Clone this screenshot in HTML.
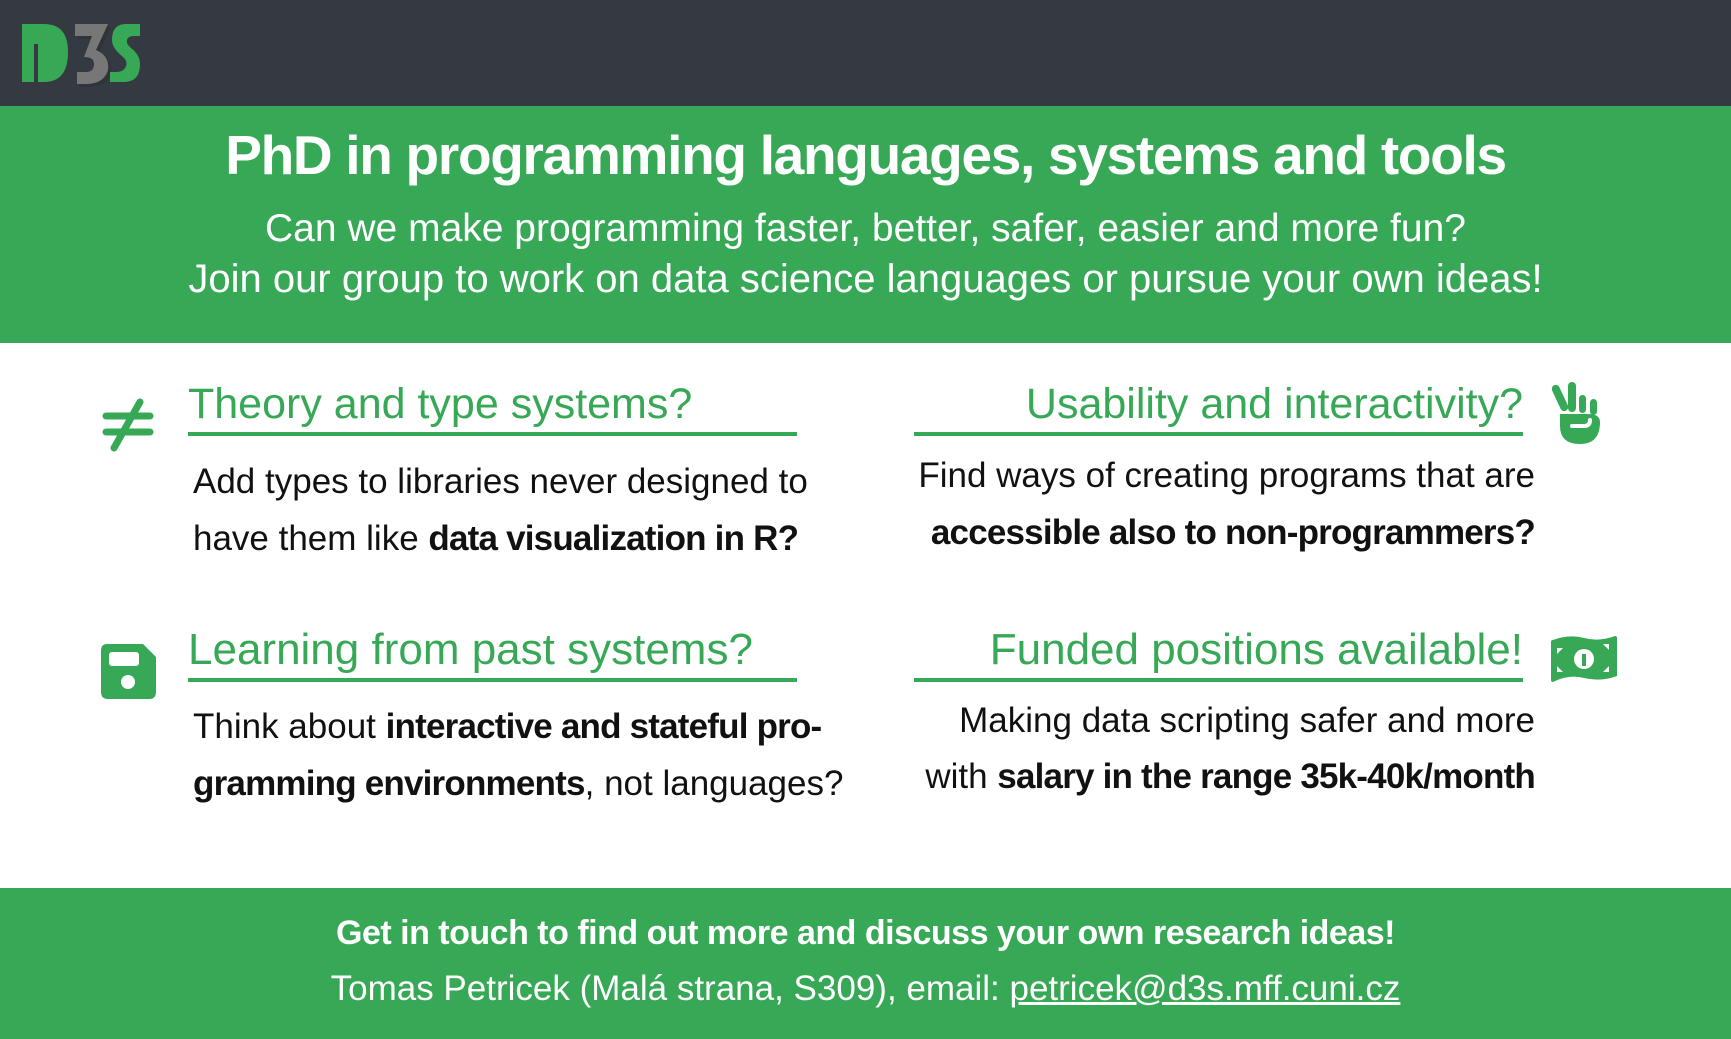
<!DOCTYPE html>
<html><head><meta charset="utf-8"><style>
*{margin:0;padding:0;box-sizing:border-box}
body{width:1731px;height:1039px;position:relative;overflow:hidden;background:#fff;font-family:"Liberation Sans",Arial,sans-serif;color:#111}
.top{position:absolute;left:0;top:0;width:1731px;height:106px;background:#353a42}
.band{position:absolute;left:0;top:106px;width:1731px;height:237px;background:#37a856}
.foot{position:absolute;left:0;top:888px;width:1731px;height:151px;background:#37a856}
.c{position:absolute;left:0;width:1731px;text-align:center;color:#fff;white-space:nowrap}
.t{position:absolute;white-space:nowrap}
.h{font-size:43px;color:#37a856;line-height:50px}
.b{font-size:35px;line-height:40px;color:#111}
.b b{font-weight:bold;letter-spacing:-0.8px}
.ul{position:absolute;height:4px;background:#37a856}
</style></head><body>
<div class="top"></div>
<svg style="position:absolute;left:0;top:0" width="160" height="106" viewBox="0 0 160 106">
<path d="M75 24 H108 L96 50 Q110 56 108 70 Q104 84 86 84 H77 L77 72 H86 Q94 72 94 64 Q94 57 84 57 L92 36 H75 Z" fill="#2b2b2b" transform="translate(3,3)" opacity="0.5"/>
<path d="M22 24 H44 Q68 24 68 52 Q68 82 44 82 H38 V44 H34 V82 H22 Z" fill="#37a856"/>
<path d="M75 24 H108 L96 50 Q110 56 108 70 Q104 84 86 84 H77 L77 72 H86 Q94 72 94 64 Q94 57 84 57 L92 36 H75 Z" fill="#777"/>
<path d="M140 24 H126 Q112 24 112 40 Q112 48 122 56 Q128 61 126 66 Q124 72 116 72 H110 V82 H124 Q140 82 140 64 Q140 55 131 48 Q126 44 127 40 Q128 36 134 36 H140 Z" fill="#37a856"/>
</svg>
<div class="band"></div>
<div class="c" style="top:122px;font-size:55px;font-weight:bold;letter-spacing:-1.3px;line-height:66px">PhD in programming languages, systems and tools</div>
<div class="c" style="top:207px;font-size:39px;line-height:44px">Can we make programming faster, better, safer, easier and more fun?</div>
<div class="c" style="top:257px;font-size:40px;line-height:44px">Join our group to work on data science languages or pursue your own ideas!</div>

<svg style="position:absolute;left:100px;top:396px" width="56" height="60" viewBox="0 0 56 60">
<g stroke="#37a856" stroke-width="7" stroke-linecap="round"><line x1="6" y1="20" x2="50" y2="20"/><line x1="6" y1="36" x2="50" y2="36"/><line x1="40" y1="6" x2="14" y2="52"/></g></svg>
<div class="t h" style="left:188px;top:379px">Theory and type systems?</div>
<div class="ul" style="left:188px;top:432px;width:609px"></div>
<div class="t b" style="left:193px;top:462px">Add types to libraries never designed to</div>
<div class="t b" style="left:193px;top:519px">have them like <b>data visualization in R?</b></div>

<div class="t h" style="right:208px;top:379px;text-align:right">Usability and interactivity?</div>
<div class="ul" style="left:914px;top:432px;width:609px"></div>
<div class="t b" style="right:196px;top:456px;text-align:right">Find ways of creating programs that are</div>
<div class="t b" style="right:196px;top:513px;text-align:right"><b>accessible also to non-programmers?</b></div>
<svg style="position:absolute;left:1552px;top:382px" width="56" height="64" viewBox="0 0 56 64">
<g fill="#37a856"><rect x="4" y="2" width="8" height="28" rx="4" transform="rotate(-25 8 16)"/><rect x="16" y="0" width="8" height="30" rx="4"/><rect x="27" y="13" width="7" height="18" rx="3.5"/><rect x="38" y="17" width="7" height="16" rx="3.5"/>
<path d="M8 32 H36 Q48 32 48 40 Q48 62 28 62 Q8 62 8 44 Z"/></g>
<path d="M20 44 H32 Q38 44 38 38" stroke="#fff" stroke-width="4" fill="none" stroke-linecap="round"/></svg>

<svg style="position:absolute;left:101px;top:644px" width="55" height="55" viewBox="0 0 55 55">
<path d="M6 0 H42 L55 13 V48 Q55 55 48 55 H7 Q0 55 0 48 V7 Q0 0 6 0 Z" fill="#37a856"/>
<rect x="8" y="8" width="30" height="14" rx="3" fill="#fff"/><circle cx="27" cy="38" r="7" fill="#fff"/></svg>
<div class="t h" style="left:188px;top:625px;font-size:44px">Learning from past systems?</div>
<div class="ul" style="left:188px;top:678px;width:609px"></div>
<div class="t b" style="left:193px;top:707px">Think about <b>interactive and stateful pro-</b></div>
<div class="t b" style="left:193px;top:764px"><b>gramming environments</b>, not languages?</div>

<div class="t h" style="right:208px;top:625px;text-align:right;font-size:44px">Funded positions available!</div>
<div class="ul" style="left:914px;top:678px;width:609px"></div>
<div class="t b" style="right:196px;top:701px;text-align:right">Making data scripting safer and more</div>
<div class="t b" style="right:196px;top:757px;text-align:right">with <b>salary in the range 35k-40k/month</b></div>
<svg style="position:absolute;left:1549px;top:632px" width="70" height="54" viewBox="0 0 70 54">
<path d="M4 8 Q20 2 35 6 Q50 10 66 4 Q68 4 68 6 V44 Q52 50 35 46 Q20 42 4 50 Q2 50 2 48 V10 Q2 8 4 8 Z" fill="#37a856"/>
<circle cx="35" cy="27" r="10" fill="#fff"/><rect x="33" y="22" width="4" height="12" fill="#37a856"/>
<path d="M8 16 L14 16 L8 22 Z M60 12 L60 18 L54 12 Z M8 40 L8 34 L14 40 Z M60 40 L54 40 L60 34 Z" fill="#fff"/></svg>

<div class="foot"></div>
<div class="c" style="top:913px;font-size:34px;font-weight:bold;letter-spacing:-0.5px;line-height:40px">Get in touch to find out more and discuss your own research ideas!</div>
<div class="c" style="top:969px;font-size:35px;line-height:40px">Tomas Petricek (Malá strana, S309), email: <span style="text-decoration:underline">petricek@d3s.mff.cuni.cz</span></div>
</body></html>
